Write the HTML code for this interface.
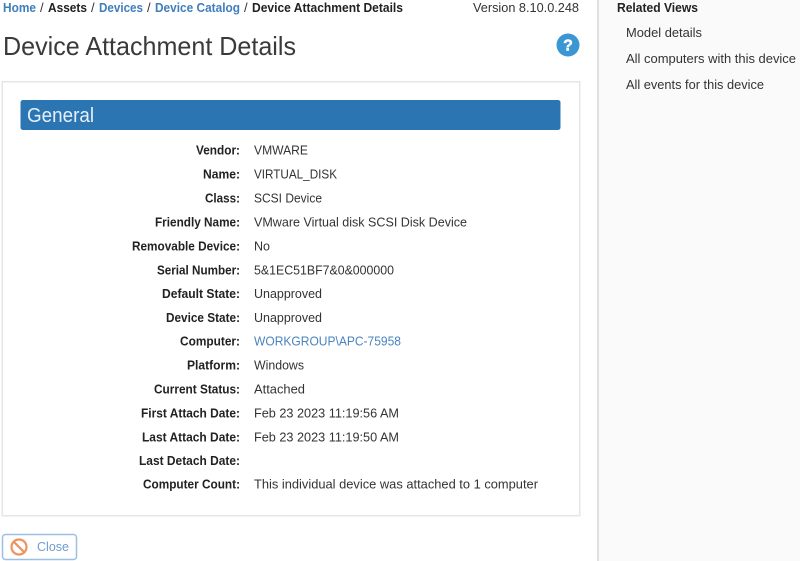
<!DOCTYPE html>
<html><head><meta charset="utf-8"><title>Device Attachment Details</title>
<style>
html,body{margin:0;padding:0;width:800px;height:561px;overflow:hidden;background:#fff}
svg{display:block}
text{font-family:"Liberation Sans",Arial,sans-serif;font-size:13px;fill:#333}
.b{font-weight:bold;fill:#222}
.s{fill:#333;font-weight:normal}
.a{fill:#4a83c0}
.ab{fill:#3f7ebd;font-weight:bold}
</style></head><body>
<svg width="800" height="561" viewBox="0 0 800 561" xmlns="http://www.w3.org/2000/svg" style="filter:blur(.3px)">
<rect x="598" y="0" width="202" height="561" fill="#fafafa"/>
<rect x="597" y="0" width="2" height="561" fill="#e0e0e0"/>

<text class="ab" x="3" y="12" textLength="33" lengthAdjust="spacingAndGlyphs">Home</text>
<text class="s" x="40" y="12">/</text>
<text class="b" x="48" y="12" textLength="39" lengthAdjust="spacingAndGlyphs">Assets</text>
<text class="s" x="91" y="12">/</text>
<text class="ab" x="99" y="12" textLength="44" lengthAdjust="spacingAndGlyphs">Devices</text>
<text class="s" x="147" y="12">/</text>
<text class="ab" x="155" y="12" textLength="85" lengthAdjust="spacingAndGlyphs">Device Catalog</text>
<text class="s" x="244" y="12">/</text>
<text class="b" x="252" y="12" textLength="151" lengthAdjust="spacingAndGlyphs">Device Attachment Details</text>
<text x="473" y="12" textLength="106" lengthAdjust="spacingAndGlyphs">Version 8.10.0.248</text>

<text x="3" y="55" style="font-size:26px;fill:#3a3a3a" textLength="293" lengthAdjust="spacingAndGlyphs">Device Attachment Details</text>

<circle cx="568" cy="45" r="11.5" fill="#3b97d3"/>
<text x="568" y="50.5" text-anchor="middle" style="font-size:16px;font-weight:bold;fill:#fff;stroke:#fff;stroke-width:.5">?</text>

<rect x="2.25" y="81.75" width="577.5" height="434" fill="#fff" stroke="#e6e6e6" stroke-width="1.5"/>
<rect x="20.5" y="100" width="540" height="30" rx="2.5" fill="#2c75b3"/>
<text x="27" y="122" style="font-size:20px;fill:#e6f0f8" textLength="67" lengthAdjust="spacingAndGlyphs">General</text>

<text class="b" x="196" y="154.5" textLength="44" lengthAdjust="spacingAndGlyphs">Vendor:</text>
<text class="b" x="203" y="178.5" textLength="37" lengthAdjust="spacingAndGlyphs">Name:</text>
<text class="b" x="205" y="202.5" textLength="35" lengthAdjust="spacingAndGlyphs">Class:</text>
<text class="b" x="155" y="226.5" textLength="85" lengthAdjust="spacingAndGlyphs">Friendly Name:</text>
<text class="b" x="132" y="250.5" textLength="108" lengthAdjust="spacingAndGlyphs">Removable Device:</text>
<text class="b" x="157" y="274.5" textLength="83" lengthAdjust="spacingAndGlyphs">Serial Number:</text>
<text class="b" x="162" y="298" textLength="78" lengthAdjust="spacingAndGlyphs">Default State:</text>
<text class="b" x="166" y="322" textLength="74" lengthAdjust="spacingAndGlyphs">Device State:</text>
<text class="b" x="180" y="345.5" textLength="60" lengthAdjust="spacingAndGlyphs">Computer:</text>
<text class="b" x="187" y="369.5" textLength="53" lengthAdjust="spacingAndGlyphs">Platform:</text>
<text class="b" x="154" y="393.5" textLength="86" lengthAdjust="spacingAndGlyphs">Current Status:</text>
<text class="b" x="141" y="417.5" textLength="99" lengthAdjust="spacingAndGlyphs">First Attach Date:</text>
<text class="b" x="142" y="441.5" textLength="98" lengthAdjust="spacingAndGlyphs">Last Attach Date:</text>
<text class="b" x="139" y="465" textLength="101" lengthAdjust="spacingAndGlyphs">Last Detach Date:</text>
<text class="b" x="143" y="488.5" textLength="97" lengthAdjust="spacingAndGlyphs">Computer Count:</text>

<text x="254" y="154.5" textLength="54" lengthAdjust="spacingAndGlyphs">VMWARE</text>
<text x="254" y="178.5" textLength="83" lengthAdjust="spacingAndGlyphs">VIRTUAL_DISK</text>
<text x="254" y="202.5" textLength="68" lengthAdjust="spacingAndGlyphs">SCSI Device</text>
<text x="254" y="226.5" textLength="213" lengthAdjust="spacingAndGlyphs">VMware Virtual disk SCSI Disk Device</text>
<text x="254" y="250.5" textLength="16" lengthAdjust="spacingAndGlyphs">No</text>
<text x="254" y="274.5" textLength="140" lengthAdjust="spacingAndGlyphs">5&amp;1EC51BF7&amp;0&amp;000000</text>
<text x="254" y="298" textLength="68" lengthAdjust="spacingAndGlyphs">Unapproved</text>
<text x="254" y="322" textLength="68" lengthAdjust="spacingAndGlyphs">Unapproved</text>
<text class="a" x="254" y="345.5" textLength="147" lengthAdjust="spacingAndGlyphs">WORKGROUP\APC-75958</text>
<text x="254" y="369.5" textLength="50" lengthAdjust="spacingAndGlyphs">Windows</text>
<text x="254" y="393.5" textLength="51" lengthAdjust="spacingAndGlyphs">Attached</text>
<text x="254" y="417.5" textLength="145" lengthAdjust="spacingAndGlyphs">Feb 23 2023 11:19:56 AM</text>
<text x="254" y="441.5" textLength="145" lengthAdjust="spacingAndGlyphs">Feb 23 2023 11:19:50 AM</text>
<text x="254" y="488.5" textLength="284" lengthAdjust="spacingAndGlyphs">This individual device was attached to 1 computer</text>

<rect x="2.5" y="534.5" width="74" height="25" rx="3" fill="#fff" stroke="#9cc0e2" stroke-width="1.5"/>
<circle cx="19" cy="547" r="7.5" fill="none" stroke="#ee925f" stroke-width="2.2"/>
<path d="M13.7 541.7L24.3 552.3" stroke="#ee925f" stroke-width="2.2" fill="none"/>
<text x="37" y="551" style="fill:#6f9dcf" textLength="32" lengthAdjust="spacingAndGlyphs">Close</text>

<text class="b" x="617" y="12" textLength="81" lengthAdjust="spacingAndGlyphs">Related Views</text>
<text x="626" y="37" textLength="76" lengthAdjust="spacingAndGlyphs">Model details</text>
<text x="626" y="63" textLength="170" lengthAdjust="spacingAndGlyphs">All computers with this device</text>
<text x="626" y="89" textLength="138" lengthAdjust="spacingAndGlyphs">All events for this device</text>
</svg>
</body></html>
